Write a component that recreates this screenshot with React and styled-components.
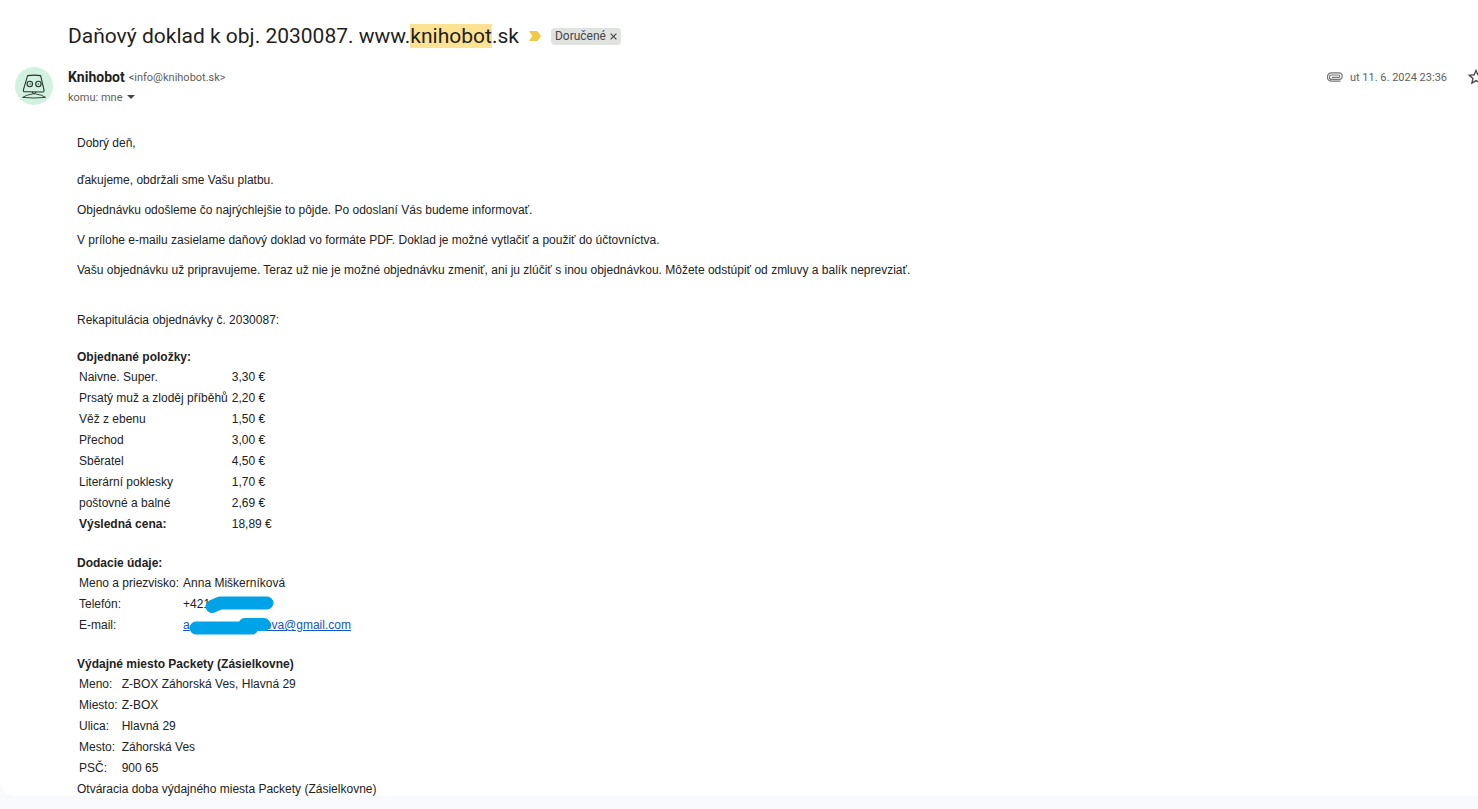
import React from 'react';
import styled, { createGlobalStyle } from 'styled-components'

const orderItems = [
    { name: 'Naivne. Super.', price: '3,30 €' },
    { name: 'Prsatý muž a zloděj příběhů', price: '2,20 €' },
    { name: 'Věž z ebenu', price: '1,50 €' },
    { name: 'Přechod', price: '3,00 €' },
    { name: 'Sběratel', price: '4,50 €' },
    { name: 'Literární poklesky', price: '1,70 €' },
    { name: 'poštovné a balné', price: '2,69 €' },
]

const pickupPlace = [
    { label: 'Meno:', value: 'Z-BOX Záhorská Ves, Hlavná 29' },
    { label: 'Miesto:', value: 'Z-BOX' },
    { label: 'Ulica:', value: 'Hlavná 29' },
    { label: 'Mesto:', value: 'Záhorská Ves' },
    { label: 'PSČ:', value: '900 65' },
]

const RobotLogo = () => (
    <svg width="38" height="38" viewBox="0 0 38 38" fill="none" stroke="#26362e" strokeWidth="1.1" strokeLinejoin="round" strokeLinecap="round" aria-hidden="true">
        <path d="M12.6 8.6 Q19 7.6 25.6 8.6 L29 22.8 Q29.4 25 27.6 25 L10 24.8 Q8 24.8 8.4 22.8 Z" />
        <circle cx="14.8" cy="17" r="2.7" />
        <circle cx="23.4" cy="17" r="2.7" />
        <circle cx="15" cy="17" r="0.2" />
        <circle cx="23.4" cy="17" r="0.2" />
        <path d="M17.4 25.2 Q19 28.8 20.8 25.2" />
        <path d="M17.4 27 Q11 27.8 7.6 30.4 Q19 31.6 30.6 30.4 Q27 27.8 21 27" strokeWidth="0.9" />
    </svg>
)

const App = () => {
    return (
        <Page>
            <GlobalStyle />
            <Card>
                <TitleRow>
                    <Title>Daňový doklad k obj. 2030087. www.<Highlight>knihobot</Highlight>.sk</Title>
                    <IconButton aria-label="Dôležité">
                        <svg width="12" height="10" viewBox="0 0 12 10" fill="#f2c744" aria-hidden="true">
                            <path d="M0 0H7.4Q8.3 0 8.9 .8L12 5 8.9 9.2Q8.3 10 7.4 10H0L3.4 5Z" />
                        </svg>
                    </IconButton>
                    <Label>
                        Doručené
                        <IconButton aria-label="Odstrániť štítok">
                            <svg width="7" height="7" viewBox="0 0 7 7" stroke="#444746" strokeWidth="1.2" aria-hidden="true">
                                <path d="M.6 .6 6.4 6.4M6.4 .6 .6 6.4" />
                            </svg>
                        </IconButton>
                    </Label>
                </TitleRow>

                <Header>
                    <Avatar><RobotLogo /></Avatar>
                    <Sender>
                        <SenderLine>
                            <Name>Knihobot</Name>
                            <Small>&lt;info@knihobot.sk&gt;</Small>
                        </SenderLine>
                        <SenderLine>
                            <Small>komu: mne</Small>
                            <IconButton aria-label="Zobraziť podrobnosti">
                                <svg width="8" height="4" viewBox="0 0 8 4" fill="#444746" aria-hidden="true">
                                    <path d="M0 0H8L4 4Z" />
                                </svg>
                            </IconButton>
                        </SenderLine>
                    </Sender>
                    <Meta>
                        <svg width="16" height="10" viewBox="0 0 16 10" fill="none" stroke="#747775" strokeWidth="1.2" strokeLinecap="round" aria-hidden="true">
                            <path d="M5.4 5.4H11.6A1.2 1.2 0 0 0 11.6 3H4.6A2.2 2.2 0 0 0 4.6 7.4H12A3.3 3.3 0 0 0 12 .8H4.6A4.2 4.2 0 0 0 4.6 9.2H13" />
                        </svg>
                        <Small>ut 11. 6. 2024 23:36</Small>
                        <StarButton aria-label="Bez hviezdičky">
                            <svg width="20" height="20" viewBox="0 0 24 24" fill="#444746" aria-hidden="true">
                                <path d="M22 9.24l-7.19-.62L12 2 9.19 8.63 2 9.24l5.46 4.73L5.82 21 12 17.27 18.18 21l-1.63-7.03L22 9.24zM12 15.4l-3.76 2.27 1-4.28-3.32-2.88 4.38-.38L12 6.1l1.71 4.04 4.38.38-3.32 2.88 1 4.28L12 15.4z" />
                            </svg>
                        </StarButton>
                    </Meta>
                </Header>

                <Body>
                    <Lead>Dobrý deň,</Lead>
                    <Text>ďakujeme, obdržali sme Vašu platbu.</Text>
                    <Text>Objednávku odošleme čo najrýchlejšie to pôjde. Po odoslaní Vás budeme informovať.</Text>
                    <Text>V prílohe e-mailu zasielame daňový doklad vo formáte PDF. Doklad je možné vytlačiť a použiť do účtovníctva.</Text>
                    <Text>Vašu objednávku už pripravujeme. Teraz už nie je možné objednávku zmeniť, ani ju zlúčiť s inou objednávkou. Môžete odstúpiť od zmluvy a balík neprevziať.</Text>
                    <Summary>Rekapitulácia objednávky č. 2030087:</Summary>

                    <SubHead>Objednané položky:</SubHead>
                    <Table>
                        <tbody>
                            {orderItems.map(item => (
                                <tr key={item.name}>
                                    <Cell>{item.name}</Cell>
                                    <Cell>{item.price}</Cell>
                                </tr>
                            ))}
                            <tr>
                                <Cell $bold>Výsledná cena:</Cell>
                                <Cell>18,89 €</Cell>
                            </tr>
                        </tbody>
                    </Table>

                    <SubHead>Dodacie údaje:</SubHead>
                    <Table>
                        <tbody>
                            <tr>
                                <Cell>Meno a priezvisko:</Cell>
                                <Cell>Anna Miškerníková</Cell>
                            </tr>
                            <tr>
                                <Cell>Telefón:</Cell>
                                <Cell>
                                    <Marked>
                                        +421
                                        <Scribble width="70" height="20" viewBox="0 0 70 20" $left={22}>
                                            <path d="M7 13.5 L15 10 H62" />
                                        </Scribble>
                                    </Marked>
                                </Cell>
                            </tr>
                            <tr>
                                <Cell>E-mail:</Cell>
                                <Cell>
                                    <Marked>
                                        <MailLink href="#">a<Gap />ova@gmail.com</MailLink>
                                        <Scribble width="84" height="22" viewBox="0 0 84 22" $left={6}>
                                            <path d="M7 14 H63 L56 10.5 H75" />
                                        </Scribble>
                                    </Marked>
                                </Cell>
                            </tr>
                        </tbody>
                    </Table>

                    <SubHead>Výdajné miesto Packety (Zásielkovne)</SubHead>
                    <Table>
                        <tbody>
                            {pickupPlace.map(row => (
                                <tr key={row.label}>
                                    <Cell>{row.label}</Cell>
                                    <Cell>{row.value}</Cell>
                                </tr>
                            ))}
                        </tbody>
                    </Table>
                    <div>Otváracia doba výdajného miesta Packety (Zásielkovne)</div>
                </Body>
            </Card>
        </Page>
    )
}

const GlobalStyle = createGlobalStyle`
    * {
        box-sizing: border-box;
    }
    body {
        margin: 0;
        background-color: #f8fafd;
    }
`

const Page = styled.div`
    height: 100vh;
    padding-bottom: 13px;
`

const Card = styled.main`
    height: 100%;
    overflow: hidden;
    padding-top: 23px;
    background-color: #fff;
    border-radius: 0 0 0 16px;
    font-family: Roboto, sans-serif;
    color: #1f1f1f;
`

const TitleRow = styled.div`
    display: flex;
    align-items: center;
    padding-left: 68px;
    gap: 10px;
`

const Title = styled.h1`
    margin: 0;
    font-size: 21px;
    font-weight: 400;
    line-height: 26px;
`

const Highlight = styled.mark`
    background-color: #fce293;
    color: inherit;
`

const IconButton = styled.button`
    display: flex;
    align-items: center;
    padding: 0;
    border: none;
    background: none;
`

const StarButton = styled(IconButton)`
    margin-left: 12px;
`

const Label = styled.span`
    display: flex;
    align-items: center;
    gap: 4px;
    height: 17px;
    padding: 0 4px;
    border-radius: 4px;
    background-color: #e1e3e1;
    color: #444746;
    font-size: 12px;
`

const Header = styled.header`
    display: flex;
    align-items: flex-start;
    margin-top: 18px;
    margin-right: -8px;
    padding-left: 15px;
`

const Avatar = styled.div`
    width: 38px;
    height: 38px;
    border-radius: 50%;
    background-color: #d3f1e0;
`

const Sender = styled.div`
    flex: 1;
    margin-left: 15px;
`

const SenderLine = styled.div`
    display: flex;
    align-items: center;
    gap: 4px;
    height: 20px;
`

const Name = styled.span`
    font-size: 14px;
    font-weight: 700;
`

const Small = styled.span`
    font-size: 11px;
    color: #5e5e5e;
`

const Meta = styled.div`
    display: flex;
    align-items: center;
    gap: 7px;
    height: 20px;
`

const Body = styled.div`
    padding: 27px 77px 0;
    font-family: "Liberation Sans", Arial, sans-serif;
    font-size: 12px;
    line-height: 18px;
    color: #222;
`

const Lead = styled.p`
    margin: 0 0 19px;
`

const Text = styled.p`
    margin: 0 0 12px;
`

const Summary = styled.p`
    margin: 32px 0 19px;
`

const SubHead = styled.h2`
    margin: 18px 0 0;
    font-size: 12px;
    font-weight: 700;
`

const Table = styled.table`
    border-spacing: 2px;
    line-height: 17px;
`

const Cell = styled.td`
    padding: 1px 2px 1px 0;
    font-weight: ${({ $bold }) => ($bold ? 700 : 400)};
    white-space: nowrap;
`

const Marked = styled.span`
    position: relative;
`

const MailLink = styled.a`
    color: #15c;
`

const Gap = styled.span`
    display: inline-block;
    width: 75px;
`

const Scribble = styled.svg`
    position: absolute;
    top: -4px;
    left: ${({ $left }) => $left}px;
    fill: none;
    stroke: #00a2e8;
    stroke-width: 13px;
    stroke-linecap: round;
    stroke-linejoin: round;
`

export default App
